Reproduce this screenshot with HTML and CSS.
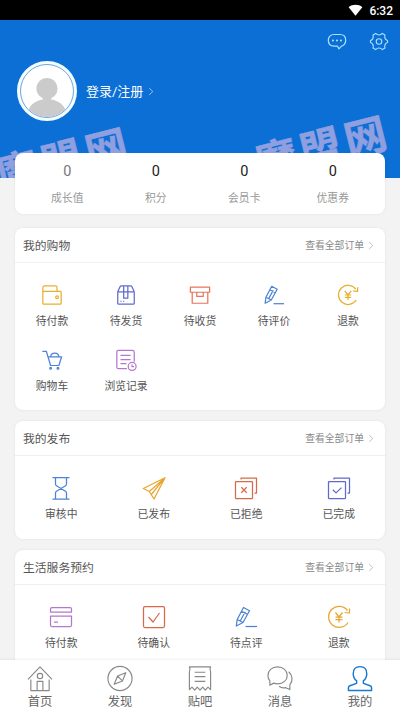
FILE: index.html
```html
<!DOCTYPE html>
<html lang="zh-CN">
<head>
<meta charset="utf-8">
<title>我的</title>
<link rel="stylesheet" href="styles.css">
</head>
<body>
<svg class="defs" aria-hidden="true">
  <symbol id="pen" viewBox="0 0 24 24"><path d="M2.300 21 3.200 14.500 9.500 2.500 15.500 5.800 9 17.500 2.300 21ZM7.500 6.300l6 3.200M3.200 14.500l5.800 3M6.200 16l5-9.200"/><path d="M11.500 21.500h11.500"/></symbol>
  <symbol id="refund" viewBox="0 0 24 24"><path d="M20.500 5.500A10.500 10.500 0 1 0 21 17.500M22.500 3.500v4.500l-4.800-.5"/><path d="m8.500 7.500 3.500 4.500 3.500-4.500M12 12v5.500M8.500 12h7M8.500 14.700h7"/></symbol>
  <symbol id="more" viewBox="0 0 6 10"><path d="m1 1.200 4 3.800-4 3.800"/></symbol>
</svg>
<div class="status">
  <svg class="wifi" viewBox="0 0 16 12"><path d="M8 12 .7 3C4.800-.3 11.200-.3 15.300 3Z"/></svg>
  <span>6:32</span>
</div>
<header class="hero">
  <span class="mark mark-left">魔盟网</span>
  <span class="mark mark-right">魔盟网</span>
  <div class="actions">
    <svg class="icon-chat" viewBox="0 0 20 18"><path d="M7 1.500h6c3.500 0 5.700 2.300 5.700 5.800s-2.200 5.700-4.200 5.900l-2.500 2.700-1.500-2.700H7c-3.500 0-5.700-2.400-5.700-5.900S3.500 1.500 7 1.500Z"/><path class="dots" d="M5.900 7.400h.1M9.900 7.400h.1M13.900 7.400h.1"/></svg>
    <svg class="icon-gear" viewBox="0 0 20 20"><path d="M6.500 1.500Q8 3.200 10 3.200T13.500 1.500L16.300 3.100Q15.600 5.500 16.500 7T19 9v2q-1.600.4-2.500 2t-.2 3.900l-2.800 1.600Q12 16.800 10 16.800T6.500 18.500L3.700 16.900Q4.400 14.500 3.500 13T1 11V9q1.600-.4 2.500-2t.2-3.900Z"/><circle cx="10" cy="10" r="2.900"/></svg>
  </div>
  <div class="profile">
    <div class="avatar">
      <svg viewBox="0 0 54 54"><circle cx="27" cy="24.500" r="11"/><path d="M22.500 32h9v5h-9ZM6 56C6 42 15 35.500 27 35.500S48 42 48 56Z"/></svg>
    </div>
    <span class="login">登录/注册</span>
    <svg class="more more-light"><use href="#more"/></svg>
  </div>
</header>
<main>
  <section class="card stats">
    <div class="stat"><b class="faded">0</b><span>成长值</span></div>
    <div class="stat"><b>0</b><span>积分</span></div>
    <div class="stat"><b>0</b><span>会员卡</span></div>
    <div class="stat"><b>0</b><span>优惠券</span></div>
  </section>

  <section class="card shopping">
    <div class="head"><h2>我的购物</h2><span>查看全部订单</span><svg class="more"><use href="#more"/></svg></div>
    <div class="grid five">
      <div class="item yellow"><svg viewBox="0 0 24 24"><rect x="2" y="8" width="20" height="14" rx="1"/><path d="M2 8.500V4Q2 2 4 2H15.500Q17.500 2 17.500 4v4"/><circle cx="17.500" cy="14.500" r="1.500"/></svg><span>待付款</span></div>
      <div class="item indigo"><svg viewBox="0 0 24 24"><path d="M3 8.500h18v12.500q0 1-1 1H4q-1 0-1-1ZM3 8.500l2.500-5.500q.5-1 1.500-1h10q1 0 1.500 1l2.500 5.500M9.500 2V15.500h4.500V2M6 19h1M9 19h1"/></svg><span>待发货</span></div>
      <div class="item red"><svg viewBox="0 0 24 24"><path d="M1.500 3.500h21v5.500h-21ZM3.500 9v12h17V9M8.500 9v4.500h7V9"/></svg><span>待收货</span></div>
      <div class="item blue"><svg><use href="#pen"/></svg><span>待评价</span></div>
      <div class="item yellow"><svg><use href="#refund"/></svg><span>退款</span></div>
      <div class="item blue"><svg viewBox="0 0 24 24"><path d="M1.500 2.500h4.300l4.700 15.500h9L22.500 8.500H7.700M10.500 8.500q.5-4 4.500-4t4.500 4"/><circle cx="10.500" cy="21" r="1"/><circle cx="18.500" cy="21" r="1"/></svg><span>购物车</span></div>
      <div class="item purple"><svg viewBox="0 0 24 24"><path d="M13 21.500H4Q2 21.500 2 19.500V3Q2 1.500 3.500 1.500H19q2 0 2 2v10.500M6 7h11M6 11.500h11M6 16h6.500"/><circle cx="18.700" cy="19" r="4.300"/><path d="M18.500 16.800v2.400h2.300"/></svg><span>浏览记录</span></div>
    </div>
  </section>

  <section class="card posts">
    <div class="head"><h2>我的发布</h2><span>查看全部订单</span><svg class="more"><use href="#more"/></svg></div>
    <div class="grid four">
      <div class="item blue"><svg viewBox="0 0 24 24"><path d="M3.500 1.500h17M3.500 23h17M6.500 1.500v6.500q0 1 1 1.700l9 5.600q1 .7 1 1.700v6M17.500 1.500v6.500q0 1-1 1.700l-9 5.600q-1 .7-1 1.700v6"/></svg><span>审核中</span></div>
      <div class="item gold"><svg viewBox="0 0 24 24"><path d="M23 1.700 1.300 12.500l6 3 4.700 7.500ZM23 1.700 7.300 15.500v0M23 1.700 9.300 18.500"/></svg><span>已发布</span></div>
      <div class="item brick"><svg viewBox="0 0 24 24"><rect x="1.500" y="5.500" width="17" height="17" rx=".5"/><path d="M7 3.500V2H22.500V17H20.500M7.300 11.300l5.400 5.400M12.700 11.300l-5.400 5.400"/></svg><span>已拒绝</span></div>
      <div class="item indigo"><svg viewBox="0 0 24 24"><rect x="1.500" y="5.500" width="17" height="17" rx=".5"/><path d="M7 3.500V2H22.500V17H20.500M5.800 13.700l3.200 3.200 5.500-5.300"/></svg><span>已完成</span></div>
    </div>
  </section>

  <section class="card booking">
    <div class="head"><h2>生活服务预约</h2><span>查看全部订单</span><svg class="more"><use href="#more"/></svg></div>
    <div class="grid four">
      <div class="item purple"><svg viewBox="0 0 24 24"><path d="M1.500 7V4q0-1.500 1.500-1.500h18q1.500 0 1.500 1.500v3ZM1.500 11h21v9q0 1.500-1.500 1.500H3q-1.500 0-1.500-1.500ZM5 17h4"/></svg><span>待付款</span></div>
      <div class="item brick"><svg viewBox="0 0 24 24"><rect x="1.500" y="1.500" width="21" height="21" rx="1.500"/><path d="m6.500 12 4.500 5 6.500-9"/></svg><span>待确认</span></div>
      <div class="item blue"><svg><use href="#pen"/></svg><span>待点评</span></div>
      <div class="item gold"><svg><use href="#refund"/></svg><span>退款</span></div>
    </div>
  </section>
</main>
<nav class="tabs">
  <div class="tab"><svg viewBox="0 0 28 28"><path d="M1.500 15 14 2l12.500 13M4.500 15v11.500h19V15M11 26.500v-9.500h6v9.500"/><circle cx="14" cy="11.500" r="2.800"/></svg><span>首页</span></div>
  <div class="tab"><svg viewBox="0 0 28 28"><circle cx="14" cy="14" r="12.500"/><path d="m20 8-3.500 8.500L8 20l3.500-8.500ZM11.500 11.500l5 5"/></svg><span>发现</span></div>
  <div class="tab"><svg viewBox="0 0 28 28"><path d="M3 2h22q-1.500 2.500 0 5v18.500l-2.700-2.500-2.800 3-2.700-3-2.800 3-2.800-3-2.700 3-2.800-3L3 25.500V7q1.500-2.500 0-5ZM8.500 7.500h11M8.500 12h11M8.500 17h11"/></svg><span>贴吧</span></div>
  <div class="tab"><svg viewBox="0 0 28 28"><path d="M11.500 2c6 0 10 3.800 10 8.800s-4 8.700-10 8.700q-2.200 0-4-.7L3.500 21v-4.500C2 15 1.500 13 1.500 10.800c0-5 4-8.800 10-8.800ZM23 7c4.500 4 4.500 9.500 1.200 13.500v5L20 23.500c-2.500.5-5 .2-7-1.500"/></svg><span>消息</span></div>
  <div class="tab active"><svg viewBox="0 0 28 28"><path d="M14 1.700c4.500 0 7 3 7 7.300 0 3-1 5.500-3.500 7.500v2.500l7 2.500q1.500.5 1.500 2v3H2v-3q0-1.500 1.500-2l7-2.500v-2.500C8 14.500 7 12 7 9c0-4.300 2.500-7.300 7-7.300Z"/></svg><span>我的</span></div>
</nav>
</body>
</html>
```
FILE: styles.css
```css
* { box-sizing: border-box; }
body {
  margin: 0;
  height: 710px;
  display: flex;
  flex-direction: column;
  overflow: hidden;
  background: #f3f3f4;
  font-family: Roboto, "Noto Sans CJK SC", sans-serif;
  color: #555;
}
.defs { display: none; }
svg {
  display: block;
  fill: none;
  stroke: currentColor;
  stroke-linejoin: round;
}
.status {
  height: 20px;
  flex: none;
  background: #000;
  color: #fff;
  display: flex;
  align-items: center;
  justify-content: flex-end;
  gap: 6px;
  padding: 2px 7px 0 0;
  font-size: 12px;
  font-weight: 500;
}
.wifi { width: 15px; height: 12px; fill: #fff; stroke: none; margin-top: -2px; }

.hero {
  position: relative;
  height: 158px;
  flex: none;
  overflow: hidden;
  background: #0b6fd6;
  color: #fff;
}
.mark {
  position: absolute;
  font: 700 42px/48px "Noto Sans CJK SC", sans-serif;
  letter-spacing: 4px;
  white-space: nowrap;
  color: #8f9fdf;
  -webkit-text-stroke: .6px #8f9fdf;
  transform: rotate(-14deg);
}
.mark-left { left: -6px; top: 113px; }
.mark-right { left: 253px; top: 101px; }
.actions {
  display: flex;
  justify-content: flex-end;
  align-items: center;
  gap: 22px;
  padding: 12px 11px 0 0;
  color: #a9e2ff;
}
.icon-chat { width: 20px; height: 18px; stroke-width: 1.200; }
.icon-gear { width: 20px; height: 19px; stroke-width: 1.200; }
.icon-chat .dots { stroke-width: 2; stroke-linecap: round; }
.profile {
  position: relative;
  display: flex;
  align-items: center;
  padding: 10px 0 0 17px;
}
.avatar {
  width: 60px;
  height: 60px;
  border: 3px solid #f2fdff;
  border-radius: 50%;
  background: #fff;
}
.avatar svg {
  width: 54px;
  height: 54px;
  border: 1px solid #6ca3df;
  border-radius: 50%;
  fill: #cbcbcb;
  stroke: none;
}
.login { margin: -2px 0 0 9px; font-size: 13px; }
.more { width: 6px; height: 9px; color: #bbb; }
.more-light { margin-left: 5px; color: #a6cdf3; }

main {
  position: relative;
  flex: 1;
  min-height: 0;
  margin-top: -25px;
  padding: 0 15px;
  overflow: hidden;
}
.card {
  background: #fff;
  border-radius: 8px;
  box-shadow: 0 0 3px rgba(0, 0, 0, .08);
}
.stats { height: 61px; padding: 0 8px; display: flex; }
.stat {
  flex: 1;
  display: flex;
  flex-direction: column;
  align-items: center;
}
.stat b { font-weight: 400; font-size: 14.500px; line-height: 20px; margin-top: 9px; color: #222; }
.stat .faded { color: #777; }
.stat span { font-size: 10.800px; line-height: 16px; margin-top: 9px; color: #999; }

.shopping { height: 182px; margin-top: 14px; }
.posts { height: 118px; margin-top: 11px; }
.booking { height: 130px; margin-top: 11px; }
.head {
  height: 35px;
  display: flex;
  align-items: center;
  padding: 0 11px 0 8px;
  border-bottom: 1px solid #f0f0f0;
}
h2 { margin: -2px 0 0; flex: 1; font-size: 11.800px; font-weight: 400; }
.head span { font-size: 9.800px; color: #888; margin-right: 4px; }
.grid { display: grid; }
.five { grid-template-columns: repeat(5, 1fr); grid-auto-rows: 65px; padding-top: 21px; }
.four { grid-template-columns: repeat(4, 1fr); padding-top: 20px; }
.item {
  display: flex;
  flex-direction: column;
  align-items: center;
  font-size: 10.800px;
  line-height: 16px;
}
.item svg { width: 24px; height: 24px; stroke-width: 1.250; }
.item span { color: #555; margin-top: 7px; }
.five .item svg { width: 22px; height: 22px; stroke-width: 1.350; }
.five .item span { margin-top: 8px; }
.yellow { color: #e5b02d; }
.gold { color: #e8a530; }
.indigo { color: #6269cd; }
.red { color: #e6745a; }
.brick { color: #d8694b; }
.blue { color: #4d83d6; }
.purple { color: #b477cc; }

.tabs {
  position: relative;
  height: 50px;
  flex: none;
  display: flex;
  background: #fff;
  box-shadow: 0 -1px 2px rgba(0, 0, 0, .06);
}
.tab {
  flex: 1;
  display: flex;
  flex-direction: column;
  align-items: center;
  padding-top: 5px;
  color: #888;
  font-size: 12.300px;
  line-height: 16px;
}
.tab svg { width: 28px; height: 28px; stroke-width: 1.200; }
.tab span { color: #666; margin-top: 2px; }
.active { color: #1678d3; }
.active svg { stroke-width: 1.500; }
```
